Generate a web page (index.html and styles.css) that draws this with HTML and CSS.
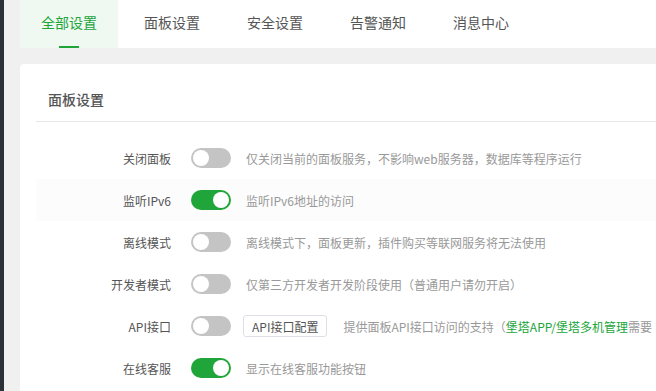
FILE: index.html
```html
<!DOCTYPE html>
<html lang="zh-CN">
<head>
    <meta charset="UTF-8">
    <meta name="viewport" content="width=device-width, initial-scale=1.0">
    <title>面板设置</title>
    <link rel="stylesheet" href="styles.css">
</head>
<body>
    <div class="side-strip"></div>
    <main class="content">
        <nav class="tabs">
            <a class="tab active">全部设置</a>
            <a class="tab">面板设置</a>
            <a class="tab">安全设置</a>
            <a class="tab">告警通知</a>
            <a class="tab">消息中心</a>
        </nav>
        <section class="card">
            <h2 class="card-title">面板设置</h2>
            <ul class="setting-list">
                <li class="setting">
                    <span class="label">关闭面板</span>
                    <span class="switch"></span>
                    <span class="desc">仅关闭当前的面板服务，不影响web服务器，数据库等程序运行</span>
                </li>
                <li class="setting hover">
                    <span class="label">监听IPv6</span>
                    <span class="switch on"></span>
                    <span class="desc">监听IPv6地址的访问</span>
                </li>
                <li class="setting">
                    <span class="label">离线模式</span>
                    <span class="switch"></span>
                    <span class="desc">离线模式下，面板更新，插件购买等联网服务将无法使用</span>
                </li>
                <li class="setting">
                    <span class="label">开发者模式</span>
                    <span class="switch"></span>
                    <span class="desc">仅第三方开发者开发阶段使用（普通用户请勿开启）</span>
                </li>
                <li class="setting">
                    <span class="label">API接口</span>
                    <span class="switch"></span>
                    <button class="btn">API接口配置</button>
                    <span class="desc">提供面板API接口访问的支持（<a class="link">堡塔APP/堡塔多机管理</a>需要</span>
                </li>
                <li class="setting">
                    <span class="label">在线客服</span>
                    <span class="switch on"></span>
                    <span class="desc">显示在线客服功能按钮</span>
                </li>
            </ul>
        </section>
    </main>
</body>
</html>
```

FILE: styles.css
```css
html, body {
    height: 100%;
}
body {
    margin: 0;
    display: flex;
    background-color: #f0f0f0;
    font-family: "Noto Sans CJK SC", "Noto Sans", sans-serif;
    color: #555;
    overflow: hidden;
}
.side-strip {
    width: 4px;
    flex: none;
    background-color: #2c3138;
}
.content {
    flex: 1;
    display: flex;
    flex-direction: column;
    padding-left: 16px;
    min-width: 0;
    overflow: hidden;
}
.tabs {
    display: flex;
    flex: none;
    gap: 5px;
    height: 48px;
    background-color: #fff;
    border-radius: 0 0 0 4px;
}
.tab {
    position: relative;
    padding: 0 21px;
    line-height: 44px;
    font-size: 14px;
    color: #555;
    cursor: pointer;
}
.tab.active {
    color: #20a53a;
    background-color: #eff8f1;
}
.tab.active::after {
    content: "";
    position: absolute;
    left: 50%;
    bottom: 0;
    width: 20px;
    height: 2px;
    margin-left: -10px;
    background-color: #20a53a;
}
.card {
    flex: 1;
    margin-top: 16px;
    background-color: #fff;
    border-radius: 4px 0 0 0;
    padding-left: 16px;
    overflow: hidden;
}
.card-title {
    margin: 0;
    padding: 25px 0 12px 12px;
    font-size: 14px;
    font-weight: 500;
    line-height: 20px;
    color: #555;
    border-bottom: 1px solid #e6e6e6;
}
.setting-list {
    list-style-type: none;
    margin: 15px 0 0;
    padding: 0;
}
.setting {
    display: flex;
    align-items: center;
    height: 42px;
    font-size: 12px;
    white-space: nowrap;
}
.setting.hover {
    background-color: #fcfcfc;
}
.label {
    width: 135px;
    flex: none;
    text-align: right;
    color: #555;
}
.switch {
    position: relative;
    flex: none;
    width: 40px;
    height: 20px;
    margin-left: 20px;
    border-radius: 10px;
    background-color: #c4c4c4;
}
.switch::after {
    content: "";
    position: absolute;
    top: 2px;
    left: 2px;
    width: 16px;
    height: 16px;
    border-radius: 50%;
    background-color: #fff;
}
.switch.on {
    background-color: #20a53a;
}
.switch.on::after {
    left: 22px;
}
.desc {
    margin-left: 15px;
    color: #999;
}
.btn {
    flex: none;
    margin-left: 12px;
    height: 22px;
    padding: 0 8px;
    font-family: inherit;
    font-size: 12px;
    color: #555;
    background-color: #fff;
    border: 1px solid #dcdfe6;
    border-radius: 3px;
}
.btn + .desc {
    margin-left: 16px;
}
.link {
    color: #20a53a;
}
```
